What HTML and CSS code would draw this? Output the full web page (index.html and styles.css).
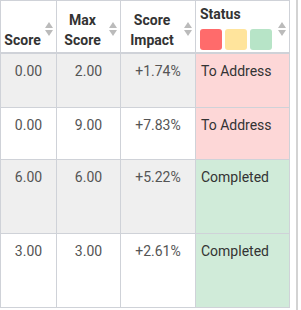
FILE: index.html
```html
<!DOCTYPE html>
<html lang="en">
<head>
  <meta charset="UTF-8">
  <title>Score table</title>
  <link rel="stylesheet" href="styles.css">
</head>
<body>
  <div class="wrap">
    <div class="grid">
      <!-- header -->
      <div class="th center"><span class="title">Score</span><i class="sort"></i></div>
      <div class="th center"><span class="title">Max<br>Score</span><i class="sort"></i></div>
      <div class="th center"><span class="title">Score<br>Impact</span><i class="sort"></i></div>
      <div class="th status-head">
        <span class="title">Status</span>
        <div class="swatches">
          <span class="sw red"></span>
          <span class="sw yellow"></span>
          <span class="sw green"></span>
        </div>
        <i class="sort"></i>
      </div>

      <!-- rows -->
      <div class="td odd">0.00</div>
      <div class="td odd">2.00</div>
      <div class="td odd">+1.74%</div>
      <div class="td st todo">To Address</div>

      <div class="td">0.00</div>
      <div class="td">9.00</div>
      <div class="td">+7.83%</div>
      <div class="td st todo">To Address</div>

      <div class="td odd">6.00</div>
      <div class="td odd">6.00</div>
      <div class="td odd">+5.22%</div>
      <div class="td st done">Completed</div>

      <div class="td">3.00</div>
      <div class="td">3.00</div>
      <div class="td">+2.61%</div>
      <div class="td st done">Completed</div>
    </div>
    <div class="scroll"></div>
  </div>
</body>
</html>
```

FILE: styles.css
```css
* { margin: 0; padding: 0; box-sizing: border-box; }
body { background: white; font-family: Roboto, "Liberation Sans", sans-serif; font-size: 14px; color: #333; }

.wrap { display: flex; align-items: flex-start; width: 301px; height: 310px; overflow: hidden; }

.grid {
  display: grid;
  grid-template-columns: 55px 63px 74px 93px;
  grid-template-rows: 52px 53px 51px 73px 73px;
  gap: 1px;
  background: #cfd2d8;
  border: 1px solid #cfd2d8;
  width: 290px;
}

/* header cells */
.th {
  position: relative;
  background: white;
  font-weight: bold;
  line-height: 20px;
  padding: 4px 16px 2px 4px;
  display: flex;
  flex-direction: column;
  justify-content: flex-end;
  border-bottom: 1px solid #cfd2d8;
}
.th.center { align-items: center; text-align: center; }
.th.status-head { justify-content: flex-start; padding: 3px 16px 4px 4px; }

.swatches { display: flex; gap: 3px; margin-top: 5px; }
.sw { width: 22px; height: 21px; border-radius: 3px; }
.sw.red { background: #ff6b6b; }
.sw.yellow { background: #ffe49c; }
.sw.green { background: #b7e4c7; }

/* sort arrows */
.sort {
  position: absolute;
  right: 3px;
  top: 21px;
  width: 8px;
  height: 14px;
}
.sort::before, .sort::after {
  content: "";
  position: absolute;
  left: 0;
  border-left: 4px solid transparent;
  border-right: 4px solid transparent;
}
.sort::before { top: 0; border-bottom: 6px solid #bbb; }
.sort::after { bottom: 0; border-top: 6px solid #bbb; }

/* body cells */
.td {
  background: white;
  color: #555;
  text-align: center;
  padding: 9px 5px;
  line-height: 16px;
}
.td.odd { background: #efefef; }
.td.st { text-align: left; color: #333; }
.td.todo { background: #fdd7d7; }
.td.done { background: #d0ebd9; }

.scroll { width: 2px; height: 310px; background: #d3d3d3; margin-left: 6px; }
```
